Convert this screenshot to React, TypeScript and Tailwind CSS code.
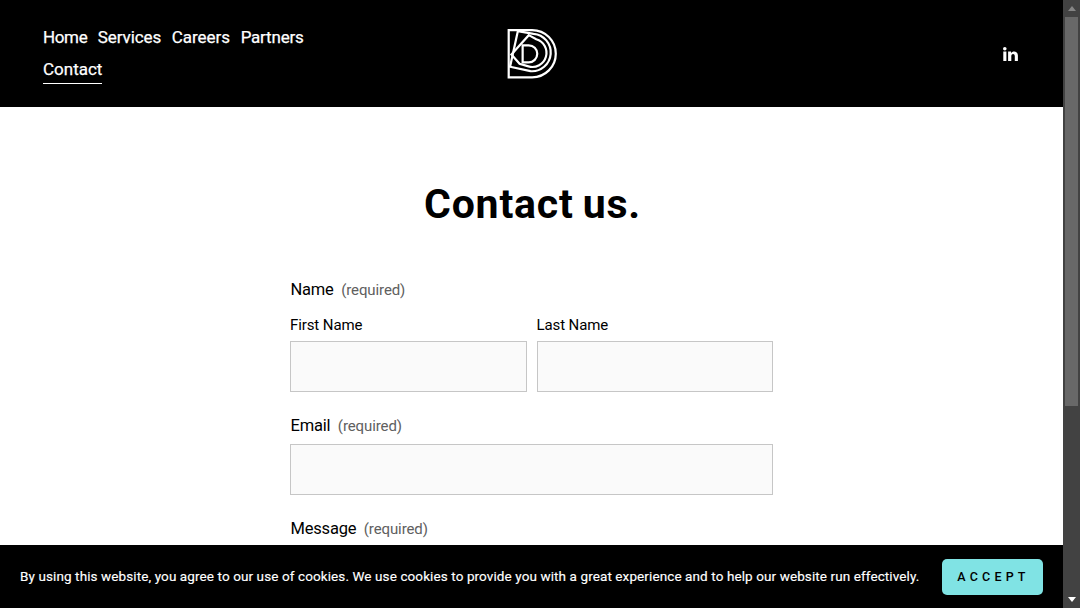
import type { ReactNode } from "react";

const links = [
  { label: "Home", tracking: "tracking-[-0.35px]" },
  { label: "Services", tracking: "tracking-[-0.1px]" },
  { label: "Careers", tracking: "tracking-[0px]" },
  { label: "Partners", tracking: "tracking-[-0.2px]" },
];

function Logo() {
  return (
    <svg className="ml-1" width="51" height="51" viewBox="25 25 150 150" fill="none" stroke="#fff" strokeWidth="6.5">
      <path d="M30 31H99A69.500 69.500 0 0 1 99 170H30Z" />
      <path d="M57 34L103 42A55 55 0 0 1 94 152L34 139Z" />
      <path d="M89 46L111 58A41 41 0 0 1 88 138L62 130L38 103Z" />
      <path d="M71 76H89A25 25 0 0 1 89 126H71Z" />
    </svg>
  );
}

function Header() {
  return (
    <header className="flex h-[107px] shrink-0 items-center justify-between bg-black pl-[43px] pr-[45px] text-white">
      <nav className="-mt-0.5 w-[280px] text-[17px] leading-8 [-webkit-text-stroke:0.25px_#fff]">
        <div className="flex gap-[10.500px]">
          {links.map((l) => (
            <a key={l.label} className={l.tracking}>{l.label}</a>
          ))}
        </div>
        <a className="block h-[31px] w-fit border-b border-white">Contact</a>
      </nav>
      <Logo />
      <div className="flex w-[280px] justify-end">
        <svg width="15" height="14" viewBox="0 0 15 14" fill="#fff">
          <circle cx="1.800" cy="1.800" r="1.800" />
          <path d="M.3 4.500h3.100V14H.3zM5.100 4.500H8V6c1.600-2.500 6.900-2.300 6.900 2.600V14h-3.100V9.200c0-2.900-3.500-2.700-3.500 0V14H5.100z" />
        </svg>
      </div>
    </header>
  );
}

function Label({ children }: { children: ReactNode }) {
  return (
    <div className="flex h-5 items-center pl-[0.500px] text-[16.500px] leading-5 tracking-[-0.2px]">
      <span>{children}</span>
      <span className="ml-[7.500px] text-[15px] tracking-[-0.1px] text-[#606060]">(required)</span>
    </div>
  );
}

function Field() {
  return <input className="block h-[51px] w-full border border-[#c6c6c6] bg-[#fafafa]" />;
}

function ContactForm() {
  return (
    <form className="mx-auto flex w-[483px] flex-col">
      <Label>Name</Label>
      <div className="mt-4 grid grid-cols-2 gap-[10px] text-[15px] leading-[18px] tracking-[-0.1px]">
        <label>
          <span className="mb-[7px] block">First Name</span>
          <Field />
        </label>
        <label>
          <span className="mb-[7px] block">Last Name</span>
          <Field />
        </label>
      </div>
      <div className="mt-6">
        <Label>Email</Label>
        <div className="mt-2"><Field /></div>
      </div>
      <div className="mt-6"><Label>Message</Label></div>
    </form>
  );
}

function CookieBar() {
  return (
    <footer className="flex h-[63px] shrink-0 items-center justify-between bg-black px-5 text-white">
      <p className="whitespace-nowrap text-[13.500px] tracking-[0.1px] [-webkit-text-stroke:0.15px_#fff]">
        By using this website, you agree to our use of cookies. We use cookies to provide you with a great experience and to help our website run effectively.
      </p>
      <button className="h-9 w-[101px] rounded-[5px] bg-[#80e3e4] pl-0.5 pt-px text-[12.500px] font-medium tracking-[4.200px] text-black">ACCEPT</button>
    </footer>
  );
}

function Scrollbar() {
  return (
    <div className="flex w-[17px] shrink-0 flex-col items-center bg-[#424242]">
      <div className="flex h-[17px] items-center">
        <svg width="8" height="5" viewBox="0 0 8 5"><path d="M0 5L4 0L8 5Z" fill="#858585" /></svg>
      </div>
      <div className="h-[389px] w-[13px] bg-[#686868]" />
      <div className="mt-auto flex h-[17px] items-center">
        <svg width="8" height="5" viewBox="0 0 8 5"><path d="M0 0L4 5L8 0Z" fill="#fff" /></svg>
      </div>
    </div>
  );
}

export default function App() {
  return (
    <div className="flex h-[608px] w-[1080px] overflow-hidden bg-white font-['Roboto',sans-serif] text-black">
      <div className="flex w-[1063px] flex-col">
        <Header />
        <main className="min-h-0 flex-1 overflow-hidden pt-[72px]">
          <h1 className="mb-[51px] pl-0.5 text-center text-[41px] font-bold leading-[50px] tracking-[0.8px] [word-spacing:-2px]">Contact us.</h1>
          <ContactForm />
        </main>
        <CookieBar />
      </div>
      <Scrollbar />
    </div>
  );
}
